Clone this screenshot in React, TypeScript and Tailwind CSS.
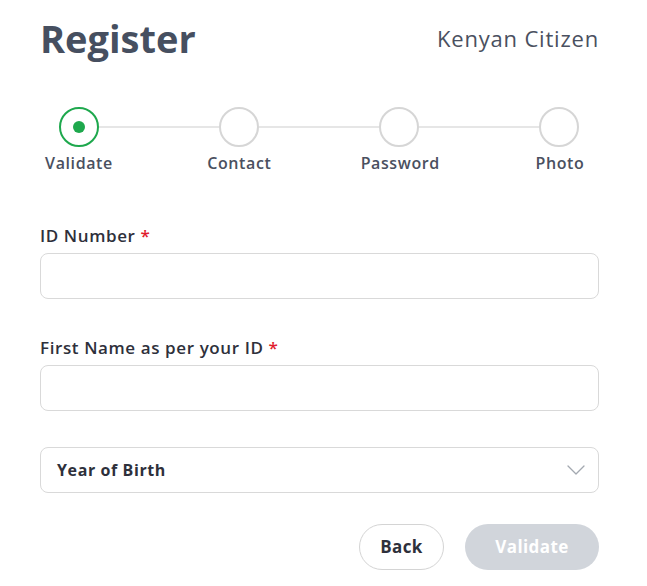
import React, { useState } from 'react';

const steps = ['Validate', 'Contact', 'Password', 'Photo'];

const Field: React.FC<{ label: string }> = ({ label }) => (
  <div className="flex flex-col">
    <label className="text-[17px] font-semibold tracking-[0.6px] text-[#2e303b] leading-5 mb-[7px]">
      {label} <span className="text-[#e11d2e]">*</span>
    </label>
    <input className="h-[46px] w-full rounded-[8px] border border-[#d9d9d9] bg-white px-4 outline-none" />
  </div>
);

const App: React.FC = () => {
  const [active] = useState(0);

  return (
    <div className="min-h-screen bg-white" style={{ fontFamily: '"Open Sans", Lato, sans-serif' }}>
      <div className="w-[559px] ml-[40px] pt-[14px]">
        {/* Header */}
        <div className="flex items-center justify-between">
          <h1 className="text-[38px] font-bold text-[#464f60] leading-[48px]">Register</h1>
          <span className="text-[22px] font-medium tracking-[0.8px] text-[#4a5060]">Kenyan Citizen</span>
        </div>

        {/* Stepper */}
        <div className="mt-[45px]">
          <div className="flex items-center pl-[19px] pr-[20px]">
            {steps.map((s, i) => (
              <React.Fragment key={s}>
                {i > 0 && <div className="h-[2px] flex-1 bg-[#e6e6e6]" />}
                {i === active ? (
                  <div className="flex h-[40px] w-[40px] items-center justify-center rounded-full border-2 border-[#1ea84d]">
                    <div className="h-[12px] w-[12px] rounded-full bg-[#1ea84d]" />
                  </div>
                ) : (
                  <div className="h-[40px] w-[40px] rounded-full border-2 border-[#d6d6d6]" />
                )}
              </React.Fragment>
            ))}
          </div>
          <div className="mt-[6px] flex justify-between">
            {steps.map((s) => (
              <span
                key={s}
                className="w-[78px] text-center text-[16px] font-semibold tracking-[0.6px] text-[#4a5060] leading-5 whitespace-nowrap"
              >
                {s}
              </span>
            ))}
          </div>
        </div>

        {/* Form */}
        <div className="mt-[53px] flex flex-col gap-[39px]">
          <Field label="ID Number" />
          <Field label="First Name as per your ID" />
        </div>

        <div className="mt-[36px] flex h-[46px] items-center justify-between rounded-[8px] border border-[#d9d9d9] pl-4 pr-[13px]">
          <span className="text-[16px] font-bold tracking-[0.6px] text-[#2e303b]">Year of Birth</span>
          <svg width="18" height="10" viewBox="0 0 18 10" fill="none">
            <path d="M1 1l8 8 8-8" stroke="#a3a8b0" strokeWidth="1.3" strokeLinecap="round" strokeLinejoin="round" />
          </svg>
        </div>

        <div className="mt-[31px] flex justify-end gap-[21px]">
          <button className="h-[46px] w-[85px] rounded-full border border-[#d4d4d4] bg-white text-[17px] font-bold tracking-[0.4px] text-[#2e303b]">
            Back
          </button>
          <button className="h-[46px] w-[134px] rounded-full bg-[#d1d5db] text-[17px] font-bold tracking-[0.4px] text-white">
            Validate
          </button>
        </div>
      </div>
    </div>
  );
};

export default App;
